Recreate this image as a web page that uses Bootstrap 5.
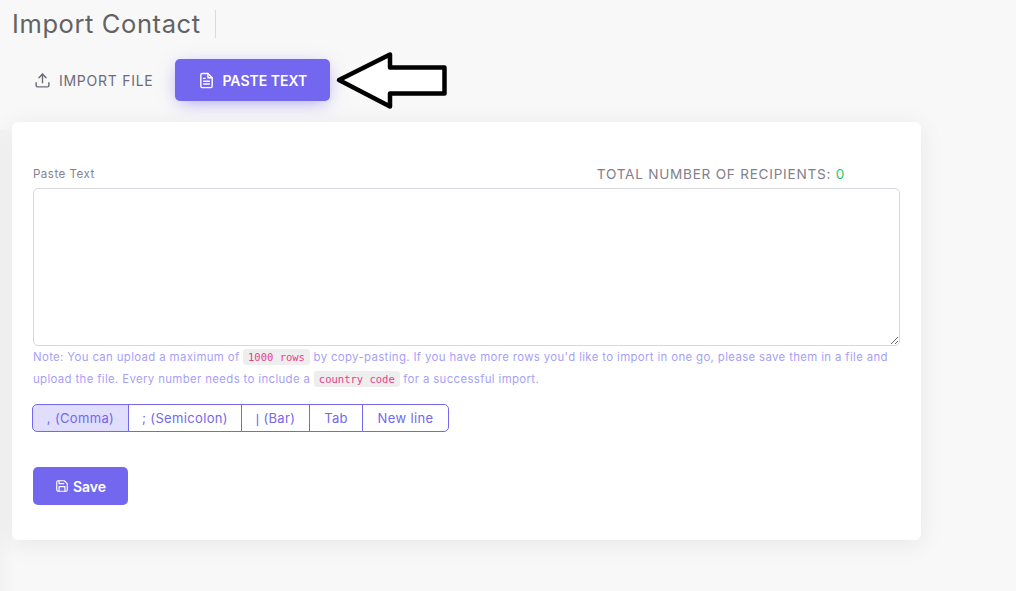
<!doctype html>
<html lang="en">
<head>
<meta charset="utf-8">
<title>Import Contact</title>
<link href="https://cdn.jsdelivr.net/npm/bootstrap@5.3.0/dist/css/bootstrap.min.css" rel="stylesheet">
<style>
html,body{height:100%;overflow:hidden}
body{background:linear-gradient(90deg,#f2f2f2,#f8f8f8 14px) 0 130px/14px 100% no-repeat,#f8f8f8;font-family:Inter,"Open Sans",sans-serif;color:#6e6b7b;font-size:14px}
.page-wrap{padding:0 12px;width:933px;position:relative}
.head-row{height:47px;margin-bottom:12px}
.page-heading{font-size:25.5px;line-height:28px;font-weight:400;color:#636363;margin:0;padding-right:14px;border-right:1px solid #d6dce1;letter-spacing:.6px}
.tab-row{height:42px;margin-bottom:21px}
.tab-link{display:flex;align-items:center;gap:8px;height:42px;border-radius:5px;font-size:14px;font-weight:400;padding:0 22px;color:#6e6b7b;text-decoration:none;letter-spacing:.73px;white-space:nowrap}
.tab-link.is-on{background:#7367f0;color:#fff;box-shadow:0 4px 18px -4px rgba(115,103,240,.65);font-weight:600;width:155px;padding:0 0 0 23px;letter-spacing:0;gap:7px}
.main-panel{background:#fff;border:0;border-radius:6px;box-shadow:0 4px 24px 0 rgba(34,41,47,.08);padding:36px 21px 35px;height:418px}
.label-row{height:30px;flex:none}
.field-label{font-size:11.6px;color:#85838f;margin:0;line-height:32px;letter-spacing:.45px}
.total-count{font-size:13.6px;color:#82808c;margin-right:55px;line-height:32px;letter-spacing:.75px}
.total-count span{color:#28c76f}
.paste-area{height:158px;flex:none;border:1px solid #d8d6de;border-radius:5px;display:block;width:100%;resize:both}
.note-text{color:#a79ff7;font-size:11.4px;line-height:22px;margin:0;flex:none;letter-spacing:.36px}
.note-text code{font-family:"DejaVu Sans Mono","Liberation Mono",monospace;font-size:10.5px;background:#eee;border-radius:3px;padding:2px 5px;color:#e83e8c;letter-spacing:0}
.sep-group{margin-top:14px;margin-left:-1px;height:28px;flex:none}
.sep-group .btn{font-size:13px;line-height:1;color:#7367f0;border-color:#7367f0;background:#fff;padding:0;display:flex;align-items:center;justify-content:center;height:28px;border-radius:5px;letter-spacing:.35px}
.sep-group .btn.is-on{background:#e0defc}
.pipe-glyph{font-family:"Liberation Sans",sans-serif;margin-right:4px}
.sep-a{width:97px}.sep-b{width:114px}.sep-c{width:69px}.sep-d{width:54px}.sep-e{width:87px}
.save-btn{margin-top:35px;width:95px;height:38px;flex:none;background:#7367f0;border:0;border-radius:5px;color:#fff;font-size:14px;font-weight:600;display:flex;align-items:center;justify-content:center;gap:4px}
.arrow-mark{position:absolute;left:0;top:0;pointer-events:none}
</style>
</head>
<body>
<div class="page-wrap">
  <div class="head-row d-flex align-items-center">
    <h2 class="page-heading">Import Contact</h2>
  </div>
  <div class="tab-row d-flex align-items-center">
    <a class="tab-link" href="#">
      <svg width="17" height="17" viewBox="0 0 24 24" fill="none" stroke="currentColor" stroke-width="2" stroke-linecap="round" stroke-linejoin="round"><path d="M21 15v4a2 2 0 0 1-2 2H5a2 2 0 0 1-2-2v-4"/><polyline points="17 8 12 3 7 8"/><line x1="12" y1="3" x2="12" y2="15"/></svg>
      IMPORT FILE
    </a>
    <a class="tab-link is-on" href="#">
      <svg width="17" height="17" viewBox="0 0 24 24" fill="none" stroke="currentColor" stroke-width="2" stroke-linecap="round" stroke-linejoin="round"><path d="M14 2H6a2 2 0 0 0-2 2v16a2 2 0 0 0 2 2h12a2 2 0 0 0 2-2V8z"/><polyline points="14 2 14 8 20 8"/><line x1="16" y1="13" x2="8" y2="13"/><line x1="16" y1="17" x2="8" y2="17"/><polyline points="10 9 9 9 8 9"/></svg>
      PASTE TEXT
    </a>
  </div>
  <div class="card main-panel">
    <div class="label-row d-flex justify-content-between">
      <label class="field-label" for="paste">Paste Text</label>
      <div class="total-count">TOTAL NUMBER OF RECIPIENTS: <span>0</span></div>
    </div>
    <textarea id="paste" class="paste-area form-control"></textarea>
    <p class="note-text">Note: You can upload a maximum of <code>1000 rows</code> by copy-pasting. If you have more rows you'd like to import in one go, please save them in a file and upload the file. Every number needs to include a <code>country code</code> for a successful import.</p>
    <div class="btn-group sep-group align-self-start" role="group">
      <button type="button" class="btn sep-a is-on">, (Comma)</button>
      <button type="button" class="btn sep-b">; (Semicolon)</button>
      <button type="button" class="btn sep-c"><span class="pipe-glyph">|</span>(Bar)</button>
      <button type="button" class="btn sep-d">Tab</button>
      <button type="button" class="btn sep-e">New line</button>
    </div>
    <button type="button" class="btn save-btn">
      <svg width="14" height="14" viewBox="0 0 24 24" fill="none" stroke="currentColor" stroke-width="2" stroke-linecap="round" stroke-linejoin="round"><path d="M19 21H5a2 2 0 0 1-2-2V5a2 2 0 0 1 2-2h11l5 5v11a2 2 0 0 1-2 2z"/><polyline points="17 21 17 13 7 13 7 21"/><polyline points="7 3 7 8 15 8"/></svg>
      Save
    </button>
  </div>
  <svg class="arrow-mark" width="460" height="120" viewBox="0 0 460 120"><polygon points="339,80 390,54.5 390,67.5 444.5,67.5 444.5,93.5 390,93.5 390,106.5" fill="#fff" stroke="#000" stroke-width="4.5" stroke-linejoin="round"/></svg>
</div>
</body>
</html>
